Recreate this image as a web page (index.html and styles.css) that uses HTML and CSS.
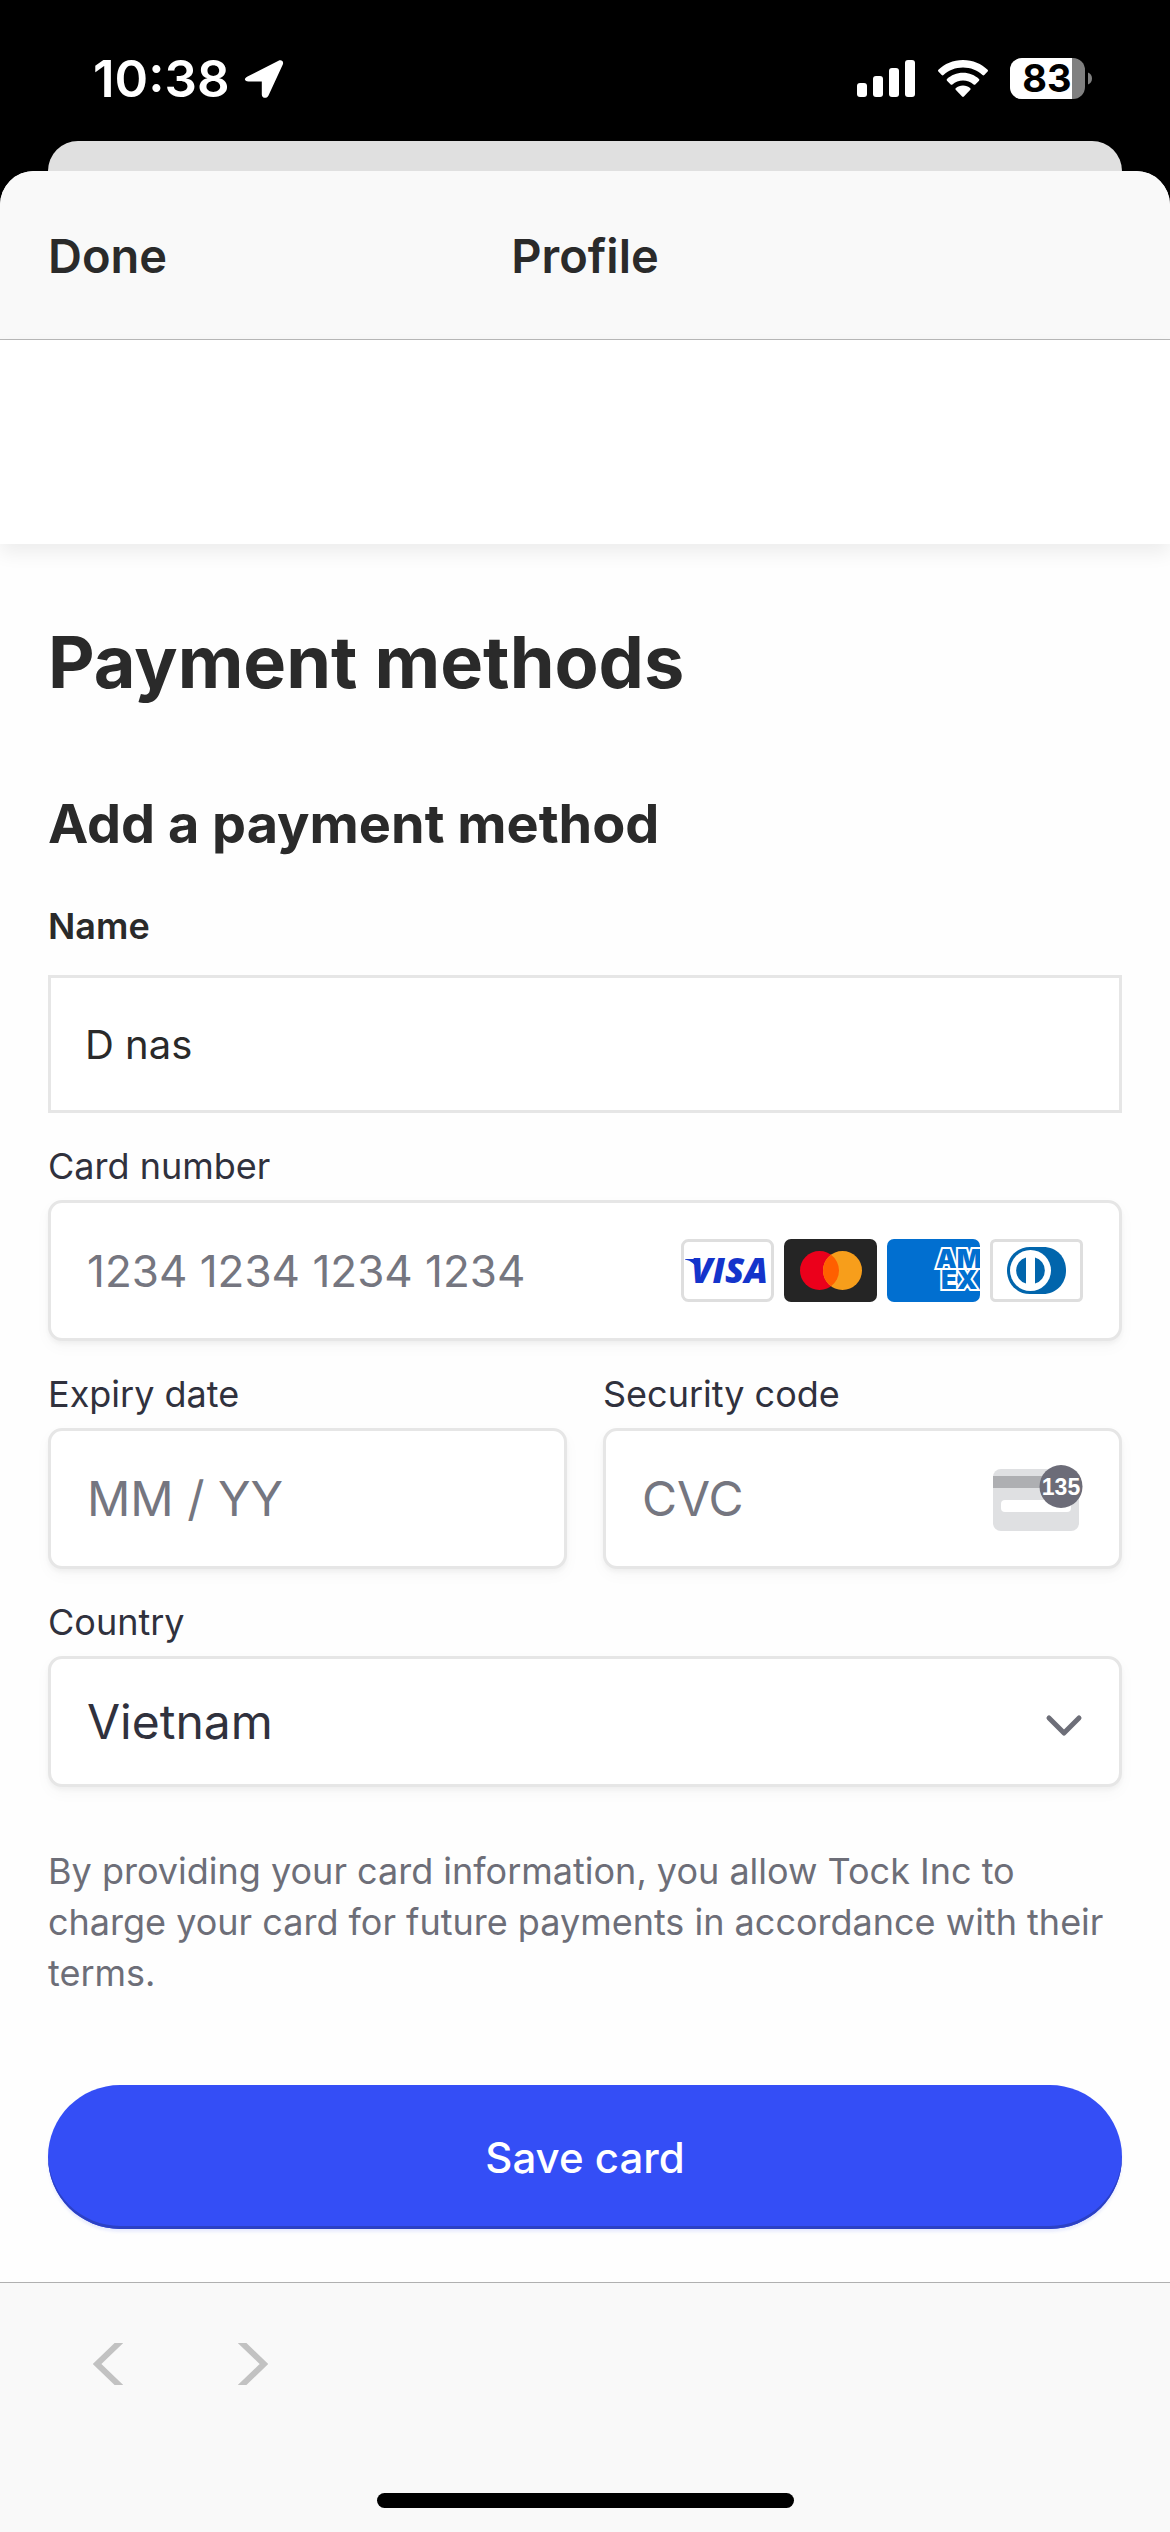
FILE: index.html
```html
<!DOCTYPE html>
<html lang="en">
<head>
    <meta charset="UTF-8">
    <meta name="viewport" content="width=device-width, initial-scale=1.0">
    <title>Profile</title>
    <link rel="stylesheet" href="styles.css">
</head>
<body>

<div class="status-bar">
    <div class="status-left">
        <span class="time">10:38</span>
        <svg class="location" width="40" height="40" viewBox="0 0 40 40" aria-hidden="true">
            <path d="M3.500 17.500 34.500 1.800C37.500.4 40 2.500 38.800 5.600L24.500 36.500C23 40 17.800 39.500 17.800 35.500V22.500H4.500C.2 22.500-.4 19.300 3.500 17.500Z" fill="#fff"/>
        </svg>
    </div>
    <div class="status-right">
        <svg width="59" height="38" viewBox="0 0 59 38" aria-hidden="true">
            <g fill="#fff">
                <rect x="0" y="23" width="10" height="14" rx="3"/>
                <rect x="16" y="16" width="10" height="21" rx="3"/>
                <rect x="32" y="8" width="10" height="29" rx="3"/>
                <rect x="48" y="0" width="10" height="37" rx="3"/>
            </g>
        </svg>
        <svg width="50" height="38" viewBox="0 0 50 38" aria-hidden="true">
            <g fill="#fff">
                <path d="M25 0C35 0 43.500 3.800 49.600 9.800Q50.400 10.700 49.600 11.600L46.300 15Q45.400 15.800 44.500 15C39.300 10.300 32.500 7.600 25 7.600S10.700 10.300 5.500 15Q4.600 15.800 3.700 15L.4 11.600Q-.4 10.700.4 9.800C6.500 3.800 15 0 25 0Z"/>
                <path d="M25 12.800C31.300 12.800 36.800 15.200 41 19Q41.800 19.900 41 20.700L37.300 24.400Q36.500 25.200 35.600 24.400C32.700 21.900 29 20.400 25 20.400S17.300 21.900 14.400 24.400Q13.500 25.200 12.700 24.400L9 20.700Q8.200 19.900 9 19C13.200 15.200 18.700 12.800 25 12.800Z"/>
                <path d="M25 25.600C27.800 25.600 30.300 26.600 32.300 28.200Q33 29 32.300 29.800L25.900 36.500Q25 37.300 24.100 36.500L17.700 29.800Q17 29 17.700 28.200C19.700 26.600 22.200 25.600 25 25.600Z"/>
            </g>
        </svg>
        <svg width="82" height="41" viewBox="0 0 82 41" role="img" aria-label="Battery 83%">
            <clipPath id="battery-shape"><rect width="75" height="41" rx="12"/></clipPath>
            <g clip-path="url(#battery-shape)">
                <rect width="75" height="41" fill="#808080"/>
                <rect width="62" height="41" fill="#fff"/>
            </g>
            <path d="M78 14.500C80.500 15.500 82 17.500 82 20.500S80.500 25.500 78 26.500Z" fill="#808080"/>
            <text x="37" y="34" text-anchor="middle" class="battery-text">83</text>
        </svg>
    </div>
</div>

<div class="back-sheet"></div>

<div class="sheet">
    <header class="sheet-header">
        <button type="button" class="done">Done</button>
        <div class="sheet-title">Profile</div>
    </header>
    <div class="site-bar"></div>

    <main class="content">
        <h1>Payment methods</h1>
        <h2>Add a payment method</h2>

        <form class="payment-form">
            <label class="name-label" for="name">Name</label>
            <input class="name-input" type="text" id="name" value="D nas">

            <label class="label" for="card-number">Card number</label>
            <div class="field field-card">
                <input type="text" id="card-number" inputmode="numeric" placeholder="1234 1234 1234 1234">
                <div class="brands">
                    <svg width="93" height="63" viewBox="0 0 93 63" role="img" aria-label="Visa">
                        <rect x="1.500" y="1.500" width="90" height="60" rx="6" fill="#fff" stroke="#dedede" stroke-width="3"/>
                        <path d="M4 20H13Q15 20 16 23L19 33Q13 22 4 20.500Z" fill="#1434cb"/>
                        <text x="10" y="44" class="visa-text">VISA</text>
                    </svg>
                    <svg width="93" height="63" viewBox="0 0 93 63" role="img" aria-label="Mastercard">
                        <rect width="93" height="63" rx="7" fill="#252525"/>
                        <circle cx="35.500" cy="31.500" r="19.500" fill="#eb001b"/>
                        <circle cx="58.500" cy="31.500" r="19.500" fill="#f79e1b"/>
                        <path d="M47 15.750A19.500 19.500 0 0 1 47 47.250A19.500 19.500 0 0 1 47 15.750Z" fill="#ff5f00"/>
                    </svg>
                    <svg width="93" height="63" viewBox="0 0 93 63" role="img" aria-label="American Express">
                        <clipPath id="amex-card"><rect width="93" height="63" rx="7"/></clipPath>
                        <g clip-path="url(#amex-card)">
                            <rect width="93" height="63" fill="#016fd0"/>
                            <text x="49" y="29" class="amex-text">AM</text>
                            <text x="54" y="50" class="amex-text">EX</text>
                        </g>
                    </svg>
                    <svg width="93" height="63" viewBox="0 0 93 63" role="img" aria-label="Diners Club">
                        <rect x="1.500" y="1.500" width="90" height="60" rx="4" fill="#fff" stroke="#dedede" stroke-width="3"/>
                        <path d="M40 8H53C67 8 76 18 76 31.500S66 55 53 55H40C27 55 17 45 17 31.500S27 8 40 8Z" fill="#0165ac"/>
                        <circle cx="40.500" cy="31.500" r="20.500" fill="#fff"/>
                        <path d="M36 18.500V44.500A13.500 13.500 0 0 1 36 18.500ZM45 18.500A13.500 13.500 0 0 1 45 44.500Z" fill="#0165ac"/>
                    </svg>
                </div>
            </div>

            <div class="row">
                <div class="column">
                    <label class="label" for="expiry">Expiry date</label>
                    <div class="field">
                        <input type="text" id="expiry" inputmode="numeric" placeholder="MM / YY">
                    </div>
                </div>
                <div class="column">
                    <label class="label" for="cvc">Security code</label>
                    <div class="field">
                        <input type="text" id="cvc" inputmode="numeric" placeholder="CVC">
                        <svg width="90" height="68" viewBox="0 0 90 68" aria-hidden="true">
                            <rect x="0" y="4" width="86" height="62" rx="8" fill="#dfe0e2"/>
                            <rect x="0" y="11" width="86" height="12" fill="#aeafb2"/>
                            <rect x="8" y="35" width="70" height="12" rx="4" fill="#fff"/>
                            <circle cx="68" cy="21.500" r="21.500" fill="#6c6c78"/>
                            <text x="68" y="30" text-anchor="middle" class="cvc-text">135</text>
                        </svg>
                    </div>
                </div>
            </div>

            <label class="label" for="country">Country</label>
            <div class="field field-select">
                <select id="country">
                    <option>Vietnam</option>
                </select>
                <svg class="chevron" width="38" height="32" viewBox="0 0 38 32" aria-hidden="true">
                    <path d="M4 12 19 27 34 12" fill="none" stroke="#6d6e78" stroke-width="5" stroke-linecap="round" stroke-linejoin="round"/>
                </svg>
            </div>

            <p class="terms">By providing your card information, you allow Tock Inc to charge your card for future payments in accordance with their terms.</p>

            <button type="submit" class="save">Save card</button>
        </form>
    </main>

    <footer class="toolbar">
        <nav class="history">
            <button type="button" aria-label="Back">
                <svg width="30" height="42" viewBox="0 0 30 42" aria-hidden="true">
                    <path d="M28 -2 4 21 28 44" fill="none" stroke="#c2c2c2" stroke-width="6"/>
                </svg>
            </button>
            <button type="button" aria-label="Forward">
                <svg width="30" height="42" viewBox="0 0 30 42" aria-hidden="true">
                    <path d="M2 -2 26 21 2 44" fill="none" stroke="#c2c2c2" stroke-width="6"/>
                </svg>
            </button>
        </nav>
        <div class="home-indicator"></div>
    </footer>
</div>

</body>
</html>
```
FILE: styles.css
```css
* {
    box-sizing: border-box;
}

body {
    font-family: Inter, 'Liberation Sans', Arial, sans-serif;
    margin: 0;
    min-height: 100vh;
    display: flex;
    flex-direction: column;
    background-color: #000;
    color: #2a2a2a;
}

svg {
    display: block;
    flex: none;
}

button,
input,
select {
    font-family: inherit;
    color: inherit;
    margin: 0;
}

button {
    border: none;
    background: none;
    padding: 0;
    cursor: pointer;
}

/* status bar */
.status-bar {
    display: flex;
    justify-content: space-between;
    align-items: center;
    height: 141px;
    padding: 16px 78px 0 93px;
    color: #fff;
}

.status-left {
    display: flex;
    align-items: center;
    gap: 14px;
}

.status-right {
    display: flex;
    align-items: center;
    gap: 22px;
}

.time {
    font-size: 51px;
    font-weight: 600;
    line-height: 60px;
}

.battery-text {
    font-size: 38px;
    font-weight: 700;
}

/* sheets */
.back-sheet {
    height: 30px;
    margin: 0 48px;
    border-radius: 30px 30px 0 0;
    background-color: #e0e0e0;
}

.sheet {
    flex: 1;
    display: flex;
    flex-direction: column;
    border-radius: 34px 34px 0 0;
    background-color: #fefefe;
    overflow: hidden;
}

.sheet-header {
    display: grid;
    grid-template-columns: 1fr auto 1fr;
    align-items: center;
    height: 169px;
    padding: 0 48px;
    border-bottom: 1px solid #b8b8b8;
    background-color: #f9f9f9;
    font-size: 47px;
    font-weight: 600;
}

.done {
    justify-self: start;
    font-size: 47px;
    font-weight: 600;
}

.site-bar {
    height: 204px;
    background-color: #fff;
    box-shadow: 0 9px 18px rgba(0, 0, 0, 0.07);
}

.content {
    flex: 1;
    padding: 76px 48px 53px;
}

h1 {
    font-size: 72px;
    line-height: 84px;
    font-weight: 700;
    margin: 0 0 88px;
}

h2 {
    font-size: 54px;
    line-height: 64px;
    font-weight: 700;
    margin: 0 0 46px;
}

/* form */
.payment-form {
    display: flex;
    flex-direction: column;
}

.name-label {
    font-size: 36px;
    line-height: 48px;
    font-weight: 600;
    margin-bottom: 25px;
}

.name-input {
    width: 100%;
    height: 138px;
    padding: 0 34px;
    border: 3px solid #e6e6e6;
    border-radius: 0;
    background-color: #fff;
    font-size: 40px;
    margin-bottom: 29px;
}

.label {
    display: block;
    font-size: 36px;
    line-height: 48px;
    color: #30313d;
    margin-bottom: 10px;
}

.field {
    display: flex;
    align-items: center;
    height: 141px;
    padding: 0 36px;
    border: 3px solid #e6e6e6;
    border-radius: 14px;
    background-color: #fff;
    box-shadow: 0 3px 4px rgba(0, 0, 0, 0.04), 0 6px 16px rgba(0, 0, 0, 0.03);
    margin-bottom: 29px;
}

.field input,
.field select {
    flex: 1;
    min-width: 0;
    height: 100%;
    padding: 0;
    border: none;
    outline: none;
    background: none;
    appearance: none;
    font-size: 48px;
    color: #30313d;
}

.field-card input {
    font-size: 44px;
}

.field input::placeholder {
    color: #757680;
    opacity: 1;
}

.brands {
    display: flex;
    gap: 10px;
}

.visa-text {
    font-family: 'Open Sans', sans-serif;
    font-size: 35px;
    font-weight: 800;
    font-style: italic;
    fill: #1434cb;
}

.amex-text {
    font-size: 26px;
    font-weight: 900;
    fill: #016fd0;
    stroke: #fff;
    stroke-width: 4px;
    paint-order: stroke;
}

.cvc-text {
    font-family: 'Liberation Sans', Arial, sans-serif;
    font-size: 23px;
    font-weight: 700;
    fill: #fff;
}

.row {
    display: grid;
    grid-template-columns: 1fr 1fr;
    gap: 36px;
}

.column {
    min-width: 0;
}

.field-select {
    height: 131px;
    margin-bottom: 59px;
}

.chevron {
    pointer-events: none;
}

.terms {
    margin: 0 0 86px;
    font-size: 36px;
    line-height: 51px;
    color: #6d6e78;
}

.save {
    height: 144px;
    border-radius: 72px;
    background-color: #344ef6;
    box-shadow: inset 0 -3px 0 #2c41c4, 0 3px 3px rgba(52, 78, 246, 0.1);
    color: #fff;
    font-size: 42px;
    font-weight: 500;
}

/* browser toolbar */
.toolbar {
    display: flex;
    flex-direction: column;
    justify-content: space-between;
    height: 250px;
    padding: 60px 93px 24px;
    border-top: 1px solid #b0b0b0;
    background-color: #f9f9f9;
}

.history {
    display: flex;
    gap: 115px;
}

.home-indicator {
    align-self: center;
    width: 417px;
    height: 15px;
    border-radius: 8px;
    background-color: #000;
}
```
